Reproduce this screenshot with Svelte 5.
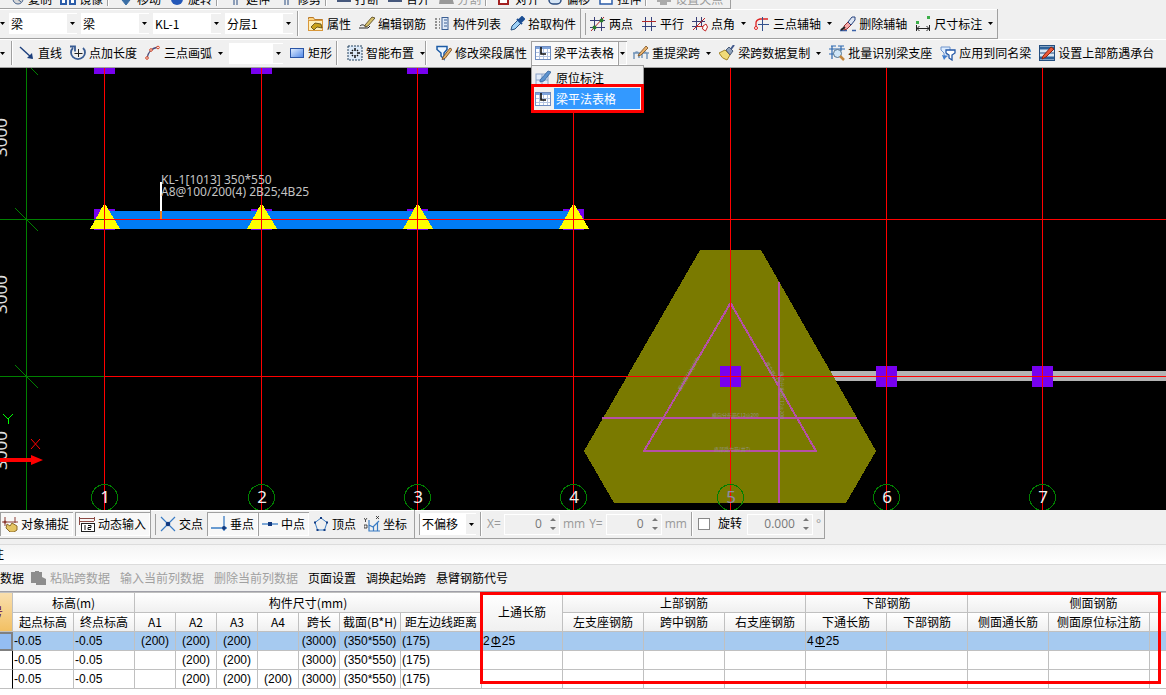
<script>
  const ic = {
    copy: '<circle cx="9" cy="8" r="5" fill="#d8d8d8" stroke="#44618c"/><path d="M6 6l6 5" stroke="#44618c"/>',
    mirror: '<path d="M1 3h5v10H1zM10 3h5v10h-5z" fill="#fff" stroke="#2b5ca8" stroke-width="2"/>',
    move: '<path d="M8 1v10M4 9l4 5 4-5z" fill="#3a6ea5" stroke="#3a6ea5"/>',
    rotate: '<circle cx="8" cy="8" r="6" fill="#2458b8"/>',
    extend: '<path d="M7 1v13M10 1v13M3 5h10" stroke="#2b4d80" fill="none"/>',
    brk: '<path d="M1 10h14" stroke="#46587c" stroke-width="2"/>',
    split: '<path d="M2 6h12l2 7H1z" fill="#999"/>',
    align: '<path d="M3 1v12h9V6" fill="#fff" stroke="#a32222" stroke-width="2"/>',
    offset: '<rect x="2" y="3" width="12" height="10" rx="4" fill="#d5e5f5" stroke="#2b4d80" stroke-width="1.5"/>',
    stretch: '<path d="M2 4h12v9H2zM5 8h7" fill="#fff" stroke="#2b5ca8" stroke-width="1.5"/>',
    grip: '<path d="M1 10h14M5 5h5v8H5z" fill="#aaa" stroke="#aaa" stroke-width="2"/>',
    props: '<path d="M.500 3.500V1.500h5l1 2h8v3" fill="#ffd27a" stroke="#b97a2a"/><rect x=".5" y="4.500" width="14" height="10" fill="#fff0bd" stroke="#d8973a"/><path d="M3 11l4-4 6 1 1 4-5-1-3 3z" fill="#c9a21b" stroke="#54430e" stroke-width=".8"/>',
    edit: '<path d="M0 12h9l2-2M1 10c2-2 4-1 5 0" fill="none" stroke="#222"/><path d="M6 9l7-8 3 1-7 8-3 1z" fill="#d6c06a" stroke="#4d3d18" stroke-width=".8"/>',
    list: '<path d="M1 3h2M1 6h2M1 9h2M1 12h2M5 3h1M5 6h1M5 9h1M5 12h1" stroke="#333"/><rect x="8" y="1.500" width="6" height="12" fill="#dfeaf8" stroke="#3b5f93"/><path d="M10 4h3M10 7h3M10 10h3" stroke="#3b5f93"/>',
    picker: '<path d="M2 14l1-4 6-6 3 3-6 6z" fill="#9ed0f5" stroke="#27517f"/><path d="M8 3l5 5M10 4l3-3 2 2-3 3z" fill="#1c4f94" stroke="#1c4f94" stroke-width="2"/>',
    two: '<path d="M4.500 1v14M11.500 1v14M0 4.500h15M0 11.500h15" stroke="#3a3f78"/><path d="M1 15L14 1" stroke="#b02525"/><circle cx="4.500" cy="11.500" r="2" fill="#2c7b2c"/><circle cx="11.500" cy="4.500" r="2" fill="#2c7b2c"/>',
    para: '<path d="M4.500 1v14M10.500 1v14M1 10.500h14" stroke="#33407c"/><path d="M1 5.500h14" stroke="#b02525"/>',
    angle: '<path d="M4.500 1v13M9.500 1v10M0 5.500h13M0 10.500h9" stroke="#3a3f78"/><path d="M1 14L13 2M4 10.500h7" stroke="#c12525"/><path d="M11 10l3-2 1.500 3-2 4-3-2z" fill="#fff" stroke="#c12525"/>',
    arc3: '<path d="M2 13V7q0-3 4-4h8" fill="none" stroke="#d22" stroke-width="1.300"/><path d="M8.500 1v14M4 8.500h11" stroke="#33508c"/><circle cx="2" cy="12" r="1.500" fill="#fff" stroke="#d22"/>',
    erase: '<path d="M0 14.500h7M12 14.500h4" stroke="#3b62a8" stroke-width="1.500"/><path d="M4 10l4-4 3 3-4 4-3 1z" fill="#f7a8a8" stroke="#903030"/><path d="M8 6l4-5h3v3l-4 5z" fill="#dfe6f2" stroke="#24407c"/><path d="M1 14l4-3" stroke="#222" stroke-width="2"/>',
    dim: '<path d="M1.500 9v6M14.500 9v6M2 12.500h12M4.500 10l-2.500 2.500 2.500 2.500M11.500 10l2.500 2.500-2.500 2.500" fill="none" stroke="#222"/><path d="M1 5h3v3H1zM12 0h3v3h-3z" fill="#3cae48"/>',
    line: '<path d="M1 2l12 11" stroke="#1c3f7c" stroke-width="1.400"/><path d="M14 14l-6-1 5-5z" fill="#1c3f7c"/>',
    length: '<path d="M3 3a7 6.500 0 1 0 10 0M0 1.500h5v5" fill="none" stroke="#395c93" stroke-width="1.800"/><path d="M8.500 4v8M4.500 8.500h8" stroke="#222"/>',
    arc: '<path d="M2 14Q3 4 13 2" fill="none" stroke="#4a4a78" stroke-width="1.300"/><circle cx="2" cy="13" r="1.300" fill="#fff" stroke="#d34020"/><circle cx="6" cy="5" r="1.300" fill="#fff" stroke="#d34020"/><circle cx="13" cy="2.500" r="1.300" fill="#fff" stroke="#d34020"/>',
    rect: '<defs><linearGradient id="rg" x2="1" y2="1"><stop stop-color="#e6f1ff"/><stop offset="1" stop-color="#4c86e8"/></linearGradient></defs><rect x="1.500" y="3.500" width="13" height="9" fill="url(#rg)" stroke="#2a55a5"/>',
    smart: '<rect x="1" y="1" width="14" height="14" fill="#dce9f7" stroke="#25425f" stroke-dasharray="2 1"/><path d="M8 3v3M8 10v3M3 8h3M10 8h3M5 5l1 1M11 5l-1 1M5 11l1-1M11 11l-1-1" stroke="#111" stroke-width="1.500"/>',
    modify: '<path d="M1 1.500h10v3L8 8v6l-3-3V8L1 4.500z" fill="#eef7ff" stroke="#1d5ba5" stroke-width="1.500"/><path d="M7 12l7-9 2 1.500-7 9-3 1z" fill="#e4b268" stroke="#6b3b14" stroke-width=".8"/>',
    table: '<rect x=".5" y="1.500" width="15" height="13" fill="#fff" stroke="#6e8cc0"/><path d="M1 3h14" stroke="#7fa4dc" stroke-width="2"/><path d="M1 7.500h14M1 11.500h14M4.500 4v10M8.500 4v10M12.500 4v10" stroke="#b4c4e0"/><path d="M6 2v7h5" fill="none" stroke="#111" stroke-width="1.600"/>',
    respan: '<path d="M1 14V9q3-4 5 0v4M9 13V9q3-4 5 0v5M0 8h16" fill="none" stroke="#7697ba" stroke-width="1.500"/><path d="M6 9l7-8 2 2-7 7-3 1z" fill="#eab26e" stroke="#7a5020" stroke-width=".8"/>',
    brush: '<path d="M0 8l6-3 5 5-3 5q-5-1-8-7z" fill="#f1db78" stroke="#a4862a"/><path d="M7 5l3-3 4 4-3 4z" fill="#8fa3bd" stroke="#4a5b78"/><path d="M12 4l3-4" stroke="#40588c" stroke-width="2"/>',
    batch: '<path d="M0 4h16M2 1h5M9 1h6M0 9h5M3 1v13M12 1v5" stroke="#2d69b0" stroke-width="1.200"/><circle cx="8.500" cy="8.500" r="4" fill="#cfe6f7" stroke="#52738f"/><path d="M11 11l4 4" stroke="#c2863c" stroke-width="2.500"/>',
    apply: '<path d="M1 2h9v3L7 8v4l-3-2V8L1 5z" fill="#dcecff" stroke="#6f94cc"/><path d="M6 5h9v3l-3 2v5l-3-2v-3L6 8z" fill="#fff" stroke="#2257a6" stroke-width="1.300"/><path d="M2 10l5 1-3 4z" fill="#3f7ed0"/>',
    topbar: '<rect x=".5" y=".5" width="15" height="15" fill="#d7e6f4" stroke="#244f80"/><path d="M1 3h14M1 13h14" stroke="#2c6098" stroke-width="3"/><path d="M1 8h14" stroke="#244f80"/><path d="M4 11l8-9 3 2-8 8-4 2z" fill="#ec5a38" stroke="#8c2411"/>',
    insitu: '<rect x="1" y="4" width="12" height="11" fill="#e2ecfa" stroke="#8aa2c8"/><path d="M1 10h12M7 4v11" stroke="#8aa2c8"/><path d="M5 10l8-9 3 1-7 9-4 1z" fill="#5d93cf" stroke="#35639a" stroke-width=".8"/>',
    snap: '<path d="M3 1v9M13 1v6M0 6h16" stroke="#8c3c34"/><circle cx="3" cy="6" r="1.500" fill="#8c3c34"/><path d="M5 8l3 2 2-3 5 3v4l-3 2H8l-4-4z" fill="#e4c463" stroke="#8c6a2a"/>',
    dyn: '<path d="M.500 1v8M15.500 1v4M0 2.500h15M0 5.500h15" stroke="#8c4a44"/><rect x="2.500" y="7.500" width="13" height="8" fill="#fff" stroke="#222"/><path d="M6 9v5M9 9.500h3v2H9v2h3" fill="none" stroke="#111"/>',
    cross: '<path d="M1 1l14 14M15 1L1 15" stroke="#3a7cc4" stroke-width="1.200"/><circle cx="8" cy="8" r="2.300" fill="#123a80"/>',
    perp: '<path d="M0 12h16M13 0v15" stroke="#3a7cc4" stroke-width="1.300"/><circle cx="13" cy="12" r="2" fill="#123a80"/>',
    mid: '<path d="M0 8h16" stroke="#3a7cc4" stroke-width="1.300"/><rect x="6" y="6" width="4" height="4" fill="#123a80"/>',
    vertex: '<path d="M8 2l6 4.500-2.500 7.500h-7L2 6.500z" fill="none" stroke="#3a7cc4"/><path d="M7 1h2v2H7zM13 5.500h2v2h-2zM10.500 13h2v2h-2zM3.500 13h2v2h-2zM1 5.500h2v2H1z" fill="#123a80"/>',
    coord: '<path d="M5 4v11h11M5 9l4 2 6-6M9.500 11v4M13.500 6v9" fill="none" stroke="#3a7cc4" stroke-width="1.200"/><path d="M0 2l1.500 2L3 2M1.500 4v2M12 0l3 3M15 0l-3 3M0 9h3v3H0z" fill="none" stroke="#222" stroke-width=".8"/>',
    paste: '<path d="M1 2h4V1h4v1h3v5l4 2v6H6v-2H1z" fill="#8d8d8d"/>',
  };

  const top = [['copy', '复制'], ['mirror', '镜像'], '|', ['move', '移动'], ['rotate', '旋转'], '|', ['extend', '延伸'], ['extend', '修剪'], '|', ['brk', '打断'], ['brk', '合并'], ['split', '分割', 'off'], '|', ['align', '对齐'], ['offset', '偏移'], ['stretch', '拉伸'], '|', ['grip', '设置夹点', 'off']];
  const memberTools = [['props', '属性'], ['edit', '编辑钢筋'], ['list', '构件列表'], ['picker', '拾取构件']];
  const axisTools = [['two', '两点'], ['para', '平行'], ['angle', '点角', 'dd'], ['arc3', '三点辅轴', 'dd'], ['erase', '删除辅轴'], ['dim', '尺寸标注', 'dd']];
  const drawTools = [['line', '直线'], ['length', '点加长度'], ['arc', '三点画弧', 'dd']];
  const beamTools = [['respan', '重提梁跨', 'dd'], ['brush', '梁跨数据复制', 'dd'], ['batch', '批量识别梁支座'], ['apply', '应用到同名梁'], ['topbar', '设置上部筋遇承台']];
  const snapTools = [['cross', '交点'], ['perp', '垂点', 'on'], ['mid', '中点', 'on'], ['vertex', '顶点'], ['coord', '坐标']];
  const combos = [['楼层构件', '梁'], ['类型', '梁'], ['构件', 'KL-1'], ['分层', '分层1']];

  const axes = [104, 261, 417, 573, 730, 886, 1042];
  const supports = axes.slice(0, 4);

  const cols = [13, 61, 61, 41, 41, 41, 41, 41, 61, 81, 81, 81, 81, 81, 81, 81, 81, 101, 70];
  const subs = ['起点标高', '终点标高', 'A1', 'A2', 'A3', 'A4', '跨长', '截面(B*H)', '距左边线距离', '左支座钢筋', '跨中钢筋', '右支座钢筋', '下通长筋', '下部钢筋', '侧面通长筋', '侧面原位标注筋', ''];
  const rows = [
    ['', '-0.05', '-0.05', '(200)', '(200)', '(200)', '', '(3000)', '(350*550)', '(175)', '2Φ25', '', '', '', '4Φ25', '', '', '', ''],
    ['', '-0.05', '-0.05', '', '(200)', '(200)', '', '(3000)', '(350*550)', '(175)', '', '', '', '', '', '', '', '', ''],
    ['', '-0.05', '-0.05', '', '(200)', '(200)', '(200)', '(3000)', '(350*550)', '(175)', '', '', '', '', '', '', '', '', ''],
  ];
</script>

{#snippet icon(name)}
  <svg class="icon" viewBox="0 0 16 16" fill="none" aria-hidden="true">{@html ic[name]}</svg>
{/snippet}

{#snippet caret()}
  <svg class="caret" viewBox="0 0 5 3" aria-hidden="true"><path d="M0 0h5L2.500 3z" /></svg>
{/snippet}

{#snippet tool(t)}
  {#if t === '|'}
    <span class="sep"></span>
  {:else}
    <button class="tool {t[2] ?? ''}" disabled={t[2] === 'off'}>
      {@render icon(t[0])}<span>{t[1]}</span>
      {#if t[2] === 'dd' || t[2] === 'dd tight'}{@render caret()}{/if}
    </button>
  {/if}
{/snippet}

{#snippet spin(id, value)}
  <span class="spin">
    <input {id} {value} disabled />
    <svg viewBox="0 0 6 14" aria-hidden="true"><path d="M0 4l3-3 3 3zM0 10h6l-3 3z" fill="#777" /></svg>
  </span>
{/snippet}

<div class="app">
  <div class="row first">
    <div class="group">
      {#each top as t}{@render tool(t)}{/each}
    </div>
  </div>

  <div class="row">
    <div class="group combos">
      <span class="stub">{@render caret()}</span>
      {#each combos as [name, v]}
        <span class="combo"><select aria-label={name}><option>{v}</option></select>{@render caret()}</span>
      {/each}
      <span class="sep"></span>
      {#each memberTools as t}{@render tool(t)}{/each}
    </div>
    <div class="group gripped flush">
      {#each axisTools as t}{@render tool(t)}{/each}
    </div>
  </div>

  <div class="row second">
    <span class="stub">{@render caret()}</span>
    <span class="sep lead"></span>
    {#each drawTools as t}{@render tool(t)}{/each}
    <span class="combo small"><select aria-label="画弧半径"><option></option></select>{@render caret()}</span>
    {@render tool(['rect', '矩形'])}
    <span class="sep"></span>
    {@render tool(['smart', '智能布置', 'dd tight'])}
    <span class="sep"></span>
    {@render tool(['modify', '修改梁段属性'])}
    <div class="splitbtn">
      <button class="tool on">{@render icon('table')}<span>梁平法表格</span></button>
      <button class="drop" aria-label="展开">{@render caret()}</button>
      <div class="menu">
        <button class="entry">{@render icon('insitu')}<span>原位标注</span></button>
        <button class="entry picked">{@render icon('table')}<span>梁平法表格</span></button>
      </div>
    </div>
    {#each beamTools as t}{@render tool(t)}{/each}
  </div>

  <svg class="canvas" role="img" aria-label="梁平面图">
    <g transform="translate(0 -68)" shape-rendering="crispEdges">
      {#each axes.slice(0, 3) as x}
        <rect x={x - 10} y="53" width="21" height="21" fill="#7800f0" />
      {/each}
      {#each supports as x}
        <rect x={x - 10} y="209" width="21" height="21" fill="#7800f0" />
      {/each}
      <rect x="104" y="211" width="470" height="18" fill="#007cf5" />
      {#each supports as x}
        <path d="M{x + 0.5} 203L{x + 16} 229H{x - 14}z" fill="#ff0" />
      {/each}
      <rect x="820" y="371" width="100%" height="10" fill="#b4b4b4" />
      <path d="M700 250H761L876 451L846 503H614L584 451z" fill="#7a7a00" />
      <path d="M730.500 303L816 451H644zM602 418H857M779 282V503" fill="none" stroke="#b650a6" stroke-width="2" />
      {#each axes.slice(4) as x}
        <rect x={x - 10} y="366" width="21" height="21" fill="#7800f0" />
      {/each}
      <path d="M26.500 68V510M0 219.500H104M0 376.500H104M31 68l7 7M15 208l23 23M15 365l23 23" stroke="#008000" />
      {#each [219.5, 376.5] as y}
        <line x1="104" y1={y} x2="100%" y2={y} stroke="#f00" />
      {/each}
      {#each axes as x}
        <line x1={x + 0.5} y1="68" x2={x + 0.5} y2="510" stroke="#f00" />
        <circle cx={x + 0.5} cy="497.500" r="13" fill="none" stroke="#008000" />
      {/each}
      <rect x="160" y="182" width="2" height="29" fill="#fff" />
      <rect x="160" y="211" width="2" height="8" fill="#f08020" />
      <path d="M3 414l5 5 5-5M8 419v5" fill="none" stroke="#0f0" />
    </g>
    <g transform="translate(0 -68)">
      <g class="dims">
        {#each [157, 314, 470] as y}
          <text transform="translate(7 {y}) rotate(-90)">3000</text>
        {/each}
      </g>
      <g class="nums">
        {#each axes as x, i}
          <text x={x + 1} y="503" class:dimmed={i === 4}>{i + 1}</text>
        {/each}
      </g>
      <text class="label" x="161" y="184">KL-1[1013] 350*550</text>
      <text class="label" x="161" y="196">A8@100/200(4) 2B25;4B25</text>
      <g class="tiny">
        <text x="712" y="417">横向分布筋C12@200</text>
        <text x="714" y="451">底部受力筋(共7)</text>
        <text transform="translate(681 391) rotate(-60)">受力筋C12@200</text>
        <text transform="translate(765 363) rotate(60)">受力筋C12</text>
        <text transform="translate(780 372) rotate(90)">纵向分布筋C12@200</text>
      </g>
      <path d="M0 458h31v-3l12 5-12 5v-3H0z" fill="#f00" />
      <path d="M31 439l9 10M40 439l-9 10" stroke="#f00" />
    </g>
  </svg>

  <div class="row status">
    <div class="group">
      {@render tool(['snap', '对象捕捉', 'on'])}
      {@render tool(['dyn', '动态输入', 'on'])}
    </div>
    <div class="group gripped">
      {#each snapTools as t}{@render tool(t)}{/each}
    </div>
    <div class="group gripped fields">
      <span class="combo offset"><select aria-label="偏移方式"><option>不偏移</option></select>{@render caret()}</span>
      <span class="sep"></span>
      <label for="dx">X=</label>{@render spin('dx', '0')}<span class="unit">mm</span>
      <label for="dy">Y=</label>{@render spin('dy', '0')}<span class="unit">mm</span>
      <span class="sep"></span>
      <label class="turn"><input type="checkbox" />旋转</label>
      <span class="angle">{@render spin('rot', '0.000')}</span><label for="rot">°</label>
    </div>
  </div>

  <div class="caption"><span>注</span></div>

  <div class="commands">
    <button>数据</button>
    <button disabled>{@render icon('paste')}粘贴跨数据</button>
    <button disabled>输入当前列数据</button>
    <button disabled>删除当前列数据</button>
    <button>页面设置</button>
    <button>调换起始跨</button>
    <button>悬臂钢筋代号</button>
  </div>

  <div class="sheet">
    <table>
      <colgroup>{#each cols as w}<col style:width="{w}px" />{/each}</colgroup>
      <thead>
        <tr class="bands">
          <th rowspan="2" class="num"><span>号</span></th>
          <th colspan="2">标高(m)</th>
          <th colspan="7">构件尺寸(mm)</th>
          <th rowspan="2">上通长筋</th>
          <th colspan="3">上部钢筋</th>
          <th colspan="2">下部钢筋</th>
          <th colspan="3">侧面钢筋</th>
        </tr>
        <tr>{#each subs as s}<th>{s}</th>{/each}</tr>
      </thead>
      <tbody>
        {#each rows as r, i}
          <tr class:selected={i === 0}>
            {#each r as c, j}
              <td class:mid={j > 2 && j < 9}>
                {#if c.includes('Φ')}{c.split('Φ')[0]}<span class="bar">Φ</span>{c.split('Φ')[1]}{:else}{c}{/if}
              </td>
            {/each}
          </tr>
        {/each}
      </tbody>
    </table>
    <div class="mark"></div>
  </div>
</div>

<style>
  :global(body) { background: #fff; }
  .app {
    position: relative;
    overflow: hidden;
    font: 12px/16px "Noto Sans CJK SC", sans-serif;
    color: #000;
  }
  button, input, select { font: inherit; color: inherit; margin: 0; }
  button { border: 0; background: none; padding: 0; white-space: nowrap; }
  .icon { width: 16px; height: 16px; flex: none; display: block; }
  .caret { width: 5px; height: 3px; flex: none; fill: #000; }

  .row {
    display: flex;
    align-items: center;
    height: 30px;
    background: #f0f0f0;
    white-space: nowrap;
  }
  .group {
    display: flex;
    flex: none;
    align-items: center;
    align-self: stretch;
    box-sizing: border-box;
    border: solid #a0a0a0;
    border-width: 0 1px 1px 0;
    box-shadow: inset 0 1px #fff;
    padding-right: 3px;
  }
  .gripped { position: relative; padding-left: 8px; }
  .gripped::before {
    content: "";
    align-self: stretch;
    width: 1px;
    margin: 4px 0 3px -4px;
    background: #a0a0a0;
  }
  .flush { padding-right: 0; }
  .first { height: 9px; align-items: flex-end; overflow: hidden; }
  .first .group { height: 19px; align-self: flex-end; padding-left: 5px; box-shadow: none; }
  .second { height: 29px; box-sizing: border-box; border-bottom: 1px solid #a0a0a0; box-shadow: inset 0 1px #fff; }

  .tool {
    display: flex;
    flex: none;
    align-items: center;
    gap: 3px;
    height: 24px;
    padding: 0 4px;
  }
  .tool .caret { margin-left: 3px; }
  .tool.tight { padding-right: 0; }
  .tool.on {
    background: #f8f8f8;
    box-shadow: inset 1px 1px #a0a0a0, inset -1px -1px #fff;
  }
  .off { color: #9a9a9a; }
  .sep {
    flex: none;
    align-self: stretch;
    width: 7px;
    box-sizing: border-box;
    border-left: 1px solid #a0a0a0;
    margin: 2px 0;
    background: linear-gradient(90deg, #fff 1px, transparent 1px);
  }
  .sep.lead { margin-left: 4px; width: 4px; }

  .combo {
    position: relative;
    display: flex;
    flex: none;
    align-items: center;
    justify-content: flex-end;
    width: 68px;
    height: 21px;
    margin: 0 2px;
    background: linear-gradient(90deg, #fff calc(100% - 10px), #f0f0f0 0);
    box-sizing: border-box;
    border: solid #fff;
    border-width: 1px 0;
    padding-right: 2px;
  }
  .combo select {
    flex: 1;
    min-width: 0;
    appearance: none;
    border: 0;
    background: none;
    padding: 0 0 0 2px;
    height: 19px;
  }
  .combo.small { width: 54px; }
  .combo.offset { width: 56px; height: 22px; }
  .stub { flex: none; width: 7px; display: flex; }
  .combos .sep { margin-left: 2px; }
  .combos { padding-right: 0; }

  .splitbtn { position: relative; display: flex; flex: none; margin-right: 2px; }
  .drop { width: 9px; padding: 0 2px; box-shadow: inset 1px 1px #a0a0a0, inset -1px -1px #fff; display: flex; align-items: center; }
  .menu {
    position: absolute;
    z-index: 2;
    top: 24px;
    left: 0;
    width: 113px;
    box-sizing: border-box;
    padding: 1px 3px 2px;
    background: #f0f0f0;
    border: 1px solid #a0a0a0;
  }
  .entry { display: flex; align-items: center; gap: 3px; width: 100%; height: 21px; }
  .entry span { flex: 1; text-align: left; padding-left: 2px; line-height: 21px; }
  .picked { outline: 3px solid #f00; outline-offset: 1px; }
  .picked span { background: #39f; color: #fff; }

  .canvas { display: block; width: 100%; height: 442px; background: #000; }
  .dims { font: 17px "Noto Sans", sans-serif; fill: #ddd; }
  .nums { font: 17px "Noto Sans", sans-serif; fill: #eee; text-anchor: middle; }
  .dimmed { fill: #8c8ca8; }
  .label { font: 12px "Noto Sans", sans-serif; fill: #c4c4c4; }
  .tiny { font: 5px "Noto Sans CJK SC", sans-serif; fill: #929280; }

  .status { height: 29px; }
  .status .group:first-child { padding: 0; gap: 2px; }
  .status .group:first-child .tool:first-child { padding-left: 2px; }
  .fields { padding-right: 0; color: #999; font-family: "Open Sans", "Noto Sans CJK SC", sans-serif; }
  .fields .combo { color: #000; font-family: "Noto Sans CJK SC", sans-serif; margin: 0 4px 0 0; }
  .fields label { margin: 0 3px 0 0; }
  .unit { margin: 0 4px 0 3px; }
  .spin {
    display: flex;
    align-items: center;
    width: 56px;
    height: 21px;
    box-sizing: border-box;
    border: 1px solid #fff;
    padding-right: 3px;
    gap: 8px;
  }
  .spin input { flex: 1; min-width: 0; width: 0; border: 0; padding: 0; background: none; text-align: right; color: #777; }
  .spin svg { width: 6px; height: 14px; flex: none; }
  .angle .spin { width: 66px; margin-right: 3px; }
  .fields .turn { display: flex; align-items: center; gap: 8px; color: #000; margin-right: 5px; }
  .turn input { appearance: none; width: 12px; height: 12px; border: 1px solid #888; background: #fff; }

  .caption {
    height: 26px;
    box-sizing: border-box;
    padding-top: 7px;
    border-bottom: 1px solid #dcdcdc;
    background: linear-gradient(#f0f0f0 5px, #dcdcdc 5px, #dcdcdc 6px, #f4f4f4 6px, #fff);
  }
  .caption span { margin-left: -8px; }
  .commands {
    display: flex;
    align-items: center;
    gap: 10px;
    height: 27px;
    background: #f0f0f0;
    border-bottom: 1px solid #a0a0a8;
    box-sizing: border-box;
  }
  .commands button { display: flex; flex: none; align-items: center; gap: 4px; }
  .commands button:nth-child(2) { margin-left: -4px; }
  .commands button:disabled { color: #a0a0a0; }

  .sheet { position: relative; overflow: hidden; padding-top: 1px; background: linear-gradient(#c0c0c0 1px, #fff 1px); }
  table { table-layout: fixed; width: 1220px; border-spacing: 0; }
  th, td {
    height: 19px;
    box-sizing: border-box;
    padding: 0;
    border: solid #c0c0c0;
    border-width: 0 1px 1px 0;
    line-height: 16px;
    white-space: nowrap;
    overflow: hidden;
  }
  .bands th { height: 20px; }
  th { font-weight: 400; background: linear-gradient(#fff, #f0f0f0); }
  th.num { background: linear-gradient(#f9dfae, #f2c063); color: #5a0050; }
  .num span { display: block; margin-left: -9px; width: 12px; }
  td { padding-left: 1px; font-family: "Liberation Sans", "Noto Sans CJK SC", sans-serif; }
  td.mid { text-align: center; padding: 0; }
  td:first-child { border-right-color: #000; }
  .selected td { background: #a6caf0; }
  .selected td:first-child { background: #94bdf2; border: 2px solid #808080; border-left: 0; }
  .bar { display: inline-block; width: 10px; margin: 0 1px; text-align: center; line-height: 10px; border-bottom: 1px solid #000; box-sizing: border-box; }
  .mark {
    position: absolute;
    left: 480px;
    top: 0;
    width: 681px;
    height: 92px;
    box-sizing: border-box;
    border: 3px solid #f00;
  }
</style>
